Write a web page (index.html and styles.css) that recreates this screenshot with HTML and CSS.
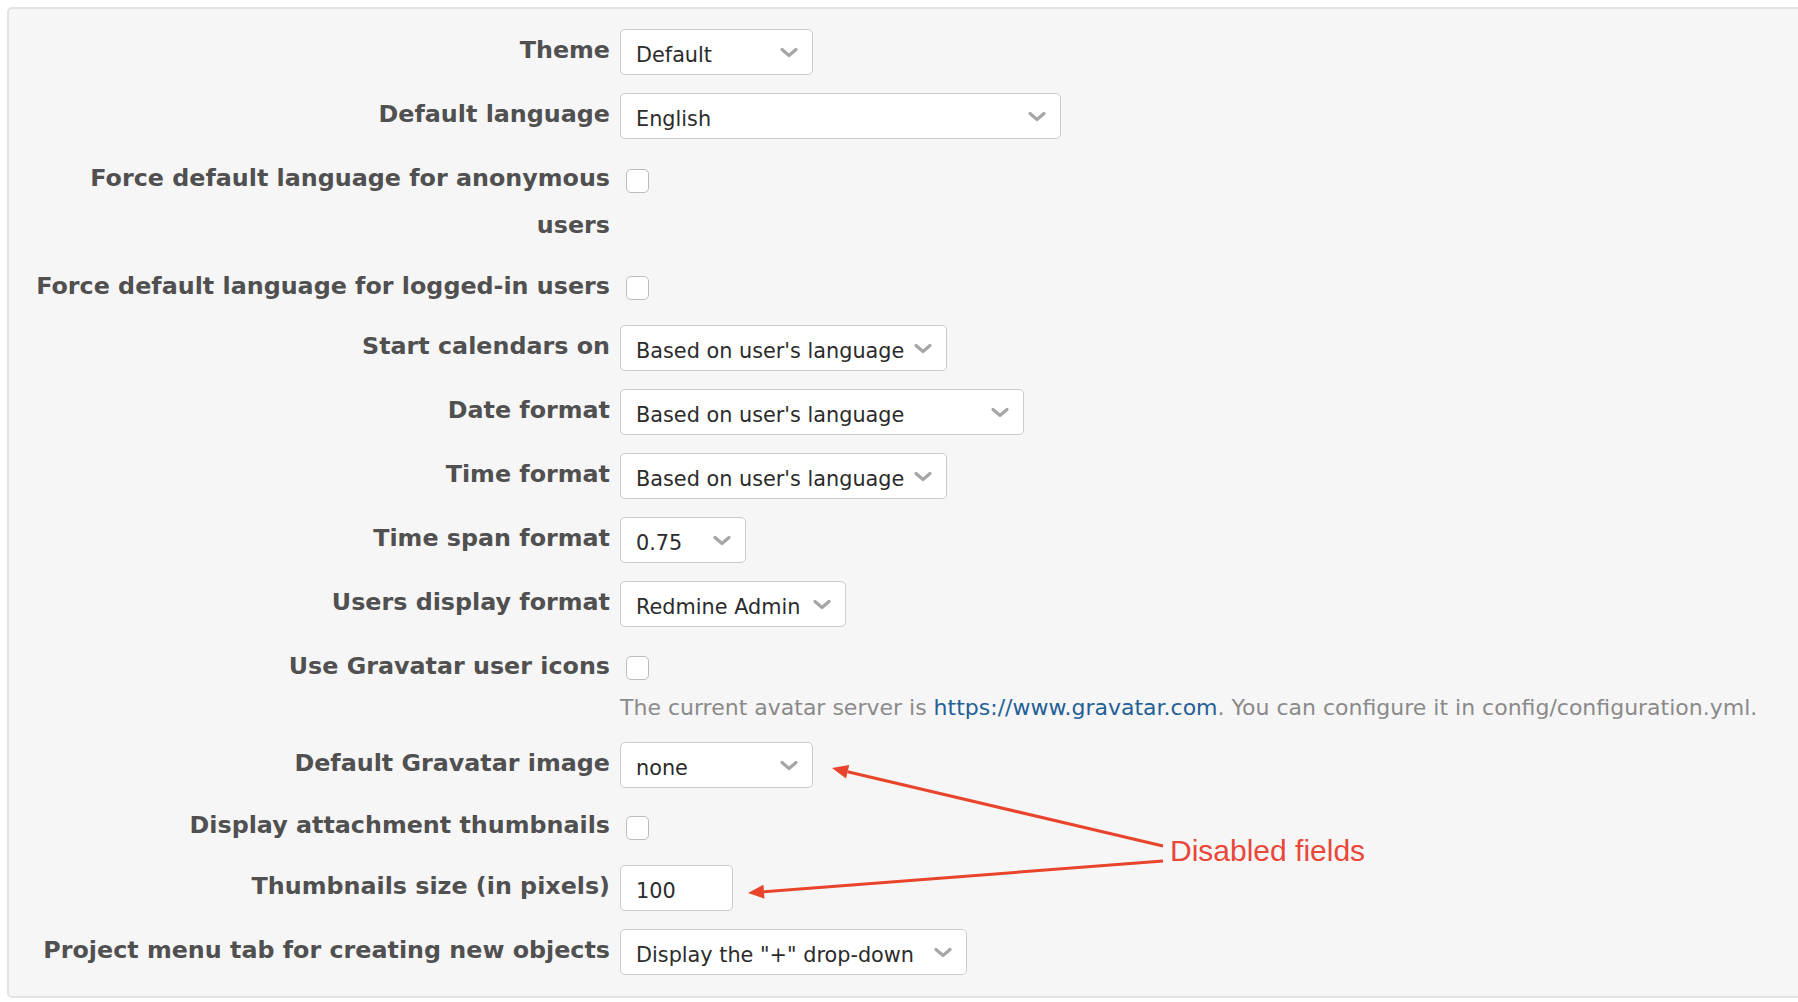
FILE: index.html
```html
<!DOCTYPE html>
<html lang="en">
<head>
<meta charset="utf-8">
<title>Settings - Display</title>
<link rel="stylesheet" href="styles.css">
</head>
<body>
<div class="panel">
  <div class="row">
    <label class="lbl">Theme</label>
    <div class="field"><div class="select w193"><span class="val">Default</span><svg class="chev" viewBox="0 0 18 10"><polyline points="2,2 9,8 16,2"/></svg></div></div>
  </div>
  <div class="row">
    <label class="lbl">Default language</label>
    <div class="field"><div class="select w441"><span class="val">English</span><svg class="chev" viewBox="0 0 18 10"><polyline points="2,2 9,8 16,2"/></svg></div></div>
  </div>
  <div class="row check wrap">
    <label class="lbl">Force default language for anonymous users</label>
    <div class="field"><span class="box"></span></div>
  </div>
  <div class="row check">
    <label class="lbl">Force default language for logged-in users</label>
    <div class="field"><span class="box"></span></div>
  </div>
  <div class="row">
    <label class="lbl">Start calendars on</label>
    <div class="field"><div class="select w327"><span class="val">Based on user's language</span><svg class="chev" viewBox="0 0 18 10"><polyline points="2,2 9,8 16,2"/></svg></div></div>
  </div>
  <div class="row">
    <label class="lbl">Date format</label>
    <div class="field"><div class="select w404"><span class="val">Based on user's language</span><svg class="chev" viewBox="0 0 18 10"><polyline points="2,2 9,8 16,2"/></svg></div></div>
  </div>
  <div class="row">
    <label class="lbl">Time format</label>
    <div class="field"><div class="select w327"><span class="val">Based on user's language</span><svg class="chev" viewBox="0 0 18 10"><polyline points="2,2 9,8 16,2"/></svg></div></div>
  </div>
  <div class="row">
    <label class="lbl">Time span format</label>
    <div class="field"><div class="select w126"><span class="val">0.75</span><svg class="chev" viewBox="0 0 18 10"><polyline points="2,2 9,8 16,2"/></svg></div></div>
  </div>
  <div class="row">
    <label class="lbl">Users display format</label>
    <div class="field"><div class="select w226"><span class="val">Redmine Admin</span><svg class="chev" viewBox="0 0 18 10"><polyline points="2,2 9,8 16,2"/></svg></div></div>
  </div>
  <div class="row check">
    <label class="lbl">Use Gravatar user icons</label>
    <div class="field col"><span class="box"></span>
      <p class="help">The current avatar server is <a href="#">https://www.gravatar.com</a>. You can configure it in config/configuration.yml.</p>
    </div>
  </div>
  <div class="row tight">
    <label class="lbl">Default Gravatar image</label>
    <div class="field"><div class="select w193"><span class="val">none</span><svg class="chev" viewBox="0 0 18 10"><polyline points="2,2 9,8 16,2"/></svg></div></div>
  </div>
  <div class="row check thumbs">
    <label class="lbl">Display attachment thumbnails</label>
    <div class="field"><span class="box"></span></div>
  </div>
  <div class="row">
    <label class="lbl">Thumbnails size (in pixels)</label>
    <div class="field"><div class="select input w113"><span class="val">100</span></div></div>
  </div>
  <div class="row">
    <label class="lbl">Project menu tab for creating new objects</label>
    <div class="field"><div class="select w347"><span class="val">Display the "+" drop-down</span><svg class="chev" viewBox="0 0 18 10"><polyline points="2,2 9,8 16,2"/></svg></div></div>
  </div>
</div>
<svg class="annot" width="1798" height="1002" viewBox="0 0 1798 1002">
  <line x1="1163" y1="846" x2="847.6" y2="771.7"/>
  <polygon points="832,768 849.2,764.9 846,778.5"/>
  <line x1="1163" y1="861" x2="764" y2="891.8"/>
  <polygon points="748,893 763.4,884.8 764.5,898.8"/>
  <text x="1170" y="861">Disabled fields</text>
</svg>
</body>
</html>
```
FILE: styles.css
```css
html, body {
  margin: 0;
  padding: 0;
  overflow: hidden;
  background: #ffffff;
}
body {
  position: relative;
  width: 1798px;
  height: 1002px;
  font-family: "DejaVu Sans", Verdana, sans-serif;
}
.panel {
  margin: 7px -30px 0 7px;
  background: #f6f6f6;
  border: 2px solid #e3e3e3;
  border-radius: 5px;
  padding: 20px 0 21px 0;
}
.row {
  display: flex;
  align-items: flex-start;
  margin-bottom: 18px;
}
.row:last-child {
  margin-bottom: 0;
}
.row.wrap {
  margin-bottom: 19px;
}
.row.tight {
  margin-bottom: 16px;
}
.row.thumbs {
  margin-bottom: 19px;
}
.lbl {
  flex: 0 0 601px;
  box-sizing: border-box;
  padding-left: 14px;
  text-align: right;
  font-weight: bold;
  font-size: 23.8px;
  line-height: 47px;
  color: #505050;
  margin-top: -2px;
  margin-bottom: -3px;
}
.field {
  margin-left: 10px;
  display: flex;
  align-items: flex-start;
}
.field.col {
  flex-direction: column;
}
.select {
  box-sizing: border-box;
  height: 46px;
  background: #ffffff;
  border: 1.5px solid #cbcbcb;
  border-radius: 5px;
  display: flex;
  align-items: center;
  padding-left: 15px;
}
.val {
  font-size: 20.8px;
  color: #2b2b2b;
  padding-top: 6px;
  white-space: nowrap;
}
.chev {
  width: 18px;
  height: 11px;
  margin-left: auto;
  margin-right: 14px;
  flex: 0 0 auto;
}
.chev polyline {
  fill: none;
  stroke: #a6a6a6;
  stroke-width: 3.2;
  stroke-linecap: round;
  stroke-linejoin: round;
}
.w113 { width: 113px; }
.w126 { width: 126px; }
.w193 { width: 193px; }
.w226 { width: 226px; }
.w327 { width: 327px; }
.w347 { width: 347px; }
.w404 { width: 404px; }
.w441 { width: 441px; }
.box {
  display: block;
  box-sizing: border-box;
  width: 23px;
  height: 24px;
  margin: 11px 0 0 6px;
  background: #ffffff;
  border: 1.5px solid #bcbcbc;
  border-radius: 5px;
}
.row.wrap .box {
  margin-top: 12px;
}
.row.thumbs .box {
  margin-top: 12px;
}
.field.col .box {
  margin-top: 11px;
}
.help {
  margin: 12px 0 0 0;
  font-size: 22px;
  line-height: 32px;
  color: #8a8a8a;
  white-space: nowrap;
}
.help a {
  color: #245f97;
  text-decoration: none;
}
.annot {
  position: absolute;
  top: 0;
  left: 0;
  pointer-events: none;
}
.annot line {
  stroke: #e8432b;
  stroke-width: 3;
}
.annot polygon {
  fill: #e8432b;
}
.annot text {
  font-family: "Liberation Sans", Arial, sans-serif;
  font-size: 30px;
  fill: #e8473a;
}
```
